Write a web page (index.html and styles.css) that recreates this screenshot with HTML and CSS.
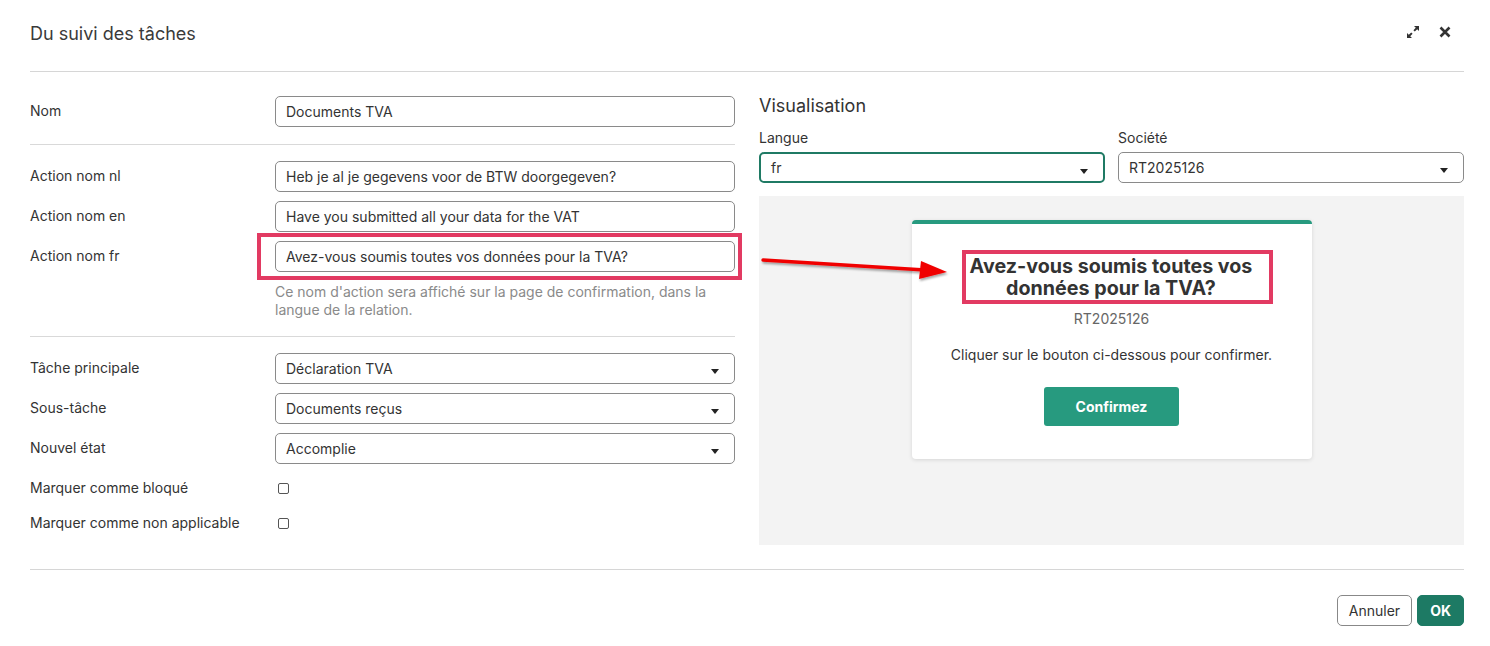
FILE: index.html
```html
<!DOCTYPE html>
<html lang="fr">
<head>
    <meta charset="UTF-8">
    <meta name="viewport" content="width=device-width, initial-scale=1.0">
    <title>Du suivi des tâches</title>
    <link rel="stylesheet" href="styles.css">
</head>
<body>
    <div class="dialog">
        <div class="dialog-header">
            <div class="dialog-title">Du suivi des tâches</div>
            <div class="header-icons">
                <!-- expand -->
                <svg width="14" height="14" viewBox="0 0 14 14">
                    <path d="M8 1h5v5l-1.8-1.8-2.4 2.4-1.4-1.4 2.4-2.4z M6 13H1V8l1.8 1.8 2.4-2.4 1.4 1.4-2.4 2.4z" fill="#333"/>
                </svg>
                <!-- close -->
                <svg width="14" height="14" viewBox="0 0 14 14">
                    <path d="M2.5 2.5l9 9M11.5 2.5l-9 9" stroke="#333" stroke-width="2.6"/>
                </svg>
            </div>
        </div>

        <div class="dialog-body">
            <div class="form-col">
                <div class="form-row">
                    <div class="form-label">Nom</div>
                    <div class="input">Documents TVA</div>
                </div>

                <div class="separator"></div>

                <div class="form-group">
                    <div class="form-row">
                        <div class="form-label">Action nom nl</div>
                        <div class="input">Heb je al je gegevens voor de BTW doorgegeven?</div>
                    </div>
                    <div class="form-row">
                        <div class="form-label">Action nom en</div>
                        <div class="input">Have you submitted all your data for the VAT</div>
                    </div>
                    <div class="form-row">
                        <div class="form-label">Action nom fr</div>
                        <div class="input highlighted">Avez-vous soumis toutes vos données pour la TVA?</div>
                    </div>
                    <div class="help-text">Ce nom d'action sera affiché sur la page de confirmation, dans la langue de la relation.</div>
                </div>

                <div class="separator"></div>

                <div class="form-group">
                    <div class="form-row">
                        <div class="form-label">Tâche principale</div>
                        <div class="input select">Déclaration TVA</div>
                    </div>
                    <div class="form-row">
                        <div class="form-label">Sous-tâche</div>
                        <div class="input select">Documents reçus</div>
                    </div>
                    <div class="form-row">
                        <div class="form-label">Nouvel état</div>
                        <div class="input select">Accomplie</div>
                    </div>
                </div>

                <div class="check-group">
                    <div class="check-row">
                        <div class="form-label">Marquer comme bloqué</div>
                        <div class="checkbox"></div>
                    </div>
                    <div class="check-row">
                        <div class="form-label">Marquer comme non applicable</div>
                        <div class="checkbox"></div>
                    </div>
                </div>
            </div>

            <div class="preview-col">
                <div class="preview-title">Visualisation</div>
                <div class="preview-filters">
                    <div class="filter">
                        <div class="filter-label">Langue</div>
                        <div class="input select focused">fr</div>
                    </div>
                    <div class="filter">
                        <div class="filter-label">Société</div>
                        <div class="input select">RT2025126</div>
                    </div>
                </div>
                <div class="preview-area">
                    <div class="preview-card">
                        <div class="card-title">Avez-vous soumis toutes vos données pour la TVA?</div>
                        <div class="card-ref">RT2025126</div>
                        <div class="card-text">Cliquer sur le bouton ci-dessous pour confirmer.</div>
                        <button class="confirm-button">Confirmez</button>
                    </div>
                </div>

                <!-- annotation arrow -->
                <svg class="arrow" width="200" height="30" viewBox="0 0 200 30">
                    <defs>
                        <filter id="shadow" x="-10%" y="-50%" width="120%" height="200%">
                            <feDropShadow dx="1" dy="2" stdDeviation="1.2" flood-color="#000" flood-opacity="0.35"/>
                        </filter>
                    </defs>
                    <g filter="url(#shadow)">
                        <path d="M4 5 L166 15" stroke="#f00000" stroke-width="3.4" stroke-linecap="round"/>
                        <path d="M162 6 L188 17 L160 24 Z" fill="#f00000"/>
                    </g>
                </svg>
            </div>
        </div>

        <div class="dialog-footer">
            <button class="btn btn-cancel">Annuler</button>
            <button class="btn btn-ok">OK</button>
        </div>
    </div>
</body>
</html>
```

FILE: styles.css
```css
body {
    margin: 0;
    padding: 0;
    background: #fff;
    font-family: Inter, "Noto Sans", Arial, sans-serif;
    color: #333;
}

.dialog {
    width: 1434px;
    padding: 0 26px 0 30px;
}

.dialog-header {
    height: 71px;
    display: flex;
    justify-content: space-between;
    align-items: center;
    border-bottom: 1px solid #d6d6d6;
}

.dialog-title {
    font-size: 18px;
    color: #3a3a3a;
    margin-top: -5px;
}

.header-icons {
    display: flex;
    gap: 18px;
    margin-top: -7px;
    margin-right: 12px;
}

.dialog-body {
    display: grid;
    grid-template-columns: 705px 705px;
    gap: 24px;
    padding-top: 24px;
    position: relative;
}

/* left form */

.form-row {
    display: flex;
    align-items: center;
}

.form-label {
    width: 245px;
    flex-shrink: 0;
    font-size: 14px;
    color: #333;
    margin-top: -3px;
}

.input {
    flex: 1;
    height: 29px;
    border: 1px solid #8a8a8a;
    border-radius: 5px;
    padding: 0 10px;
    font-size: 14px;
    line-height: 29px;
    color: #333;
    box-sizing: content-box;
    position: relative;
    white-space: nowrap;
}

.form-row .input {
    max-width: 438px;
}

.input.select::after {
    content: "";
    position: absolute;
    right: 15px;
    top: 15px;
    border-left: 4.5px solid transparent;
    border-right: 4.5px solid transparent;
    border-top: 5px solid #222;
}

.input.focused {
    border: 2px solid #1f7a64;
    height: 27px;
    line-height: 27px;
    padding: 0 10px 0 10px;
    margin: 0;
}

.input.highlighted::before {
    content: "";
    position: absolute;
    left: -19px;
    right: -8px;
    top: -9px;
    bottom: -9px;
    border: 4px solid #e23a62;
}

.separator {
    height: 1px;
    background: #d9d9d9;
    margin: 17px 0 16px;
}

.form-group {
    display: flex;
    flex-direction: column;
    gap: 9px;
}

.help-text {
    margin-left: 245px;
    margin-top: 2px;
    font-size: 14px;
    line-height: 18px;
    color: #8a8a8a;
    padding-right: 20px;
}

.check-group {
    display: flex;
    flex-direction: column;
    gap: 8px;
    margin-top: 11px;
}

.check-row {
    display: flex;
    align-items: center;
    height: 27px;
}

.checkbox {
    width: 9px;
    height: 9px;
    border: 1.5px solid #555;
    border-radius: 2px;
    margin-left: 3px;
}

/* right preview */

.preview-col {
    display: flex;
    flex-direction: column;
    position: relative;
}

.preview-title {
    font-size: 18px;
    color: #333;
    margin-top: -1px;
    line-height: 22px;
}

.preview-filters {
    display: grid;
    grid-template-columns: 1fr 1fr;
    gap: 13px;
    margin-top: 12px;
}

.filter-label {
    font-size: 14px;
    line-height: 18px;
    margin-bottom: 5px;
    color: #333;
}

.preview-filters .input {
    flex: none;
}

.preview-area {
    margin-top: 13px;
    height: 349px;
    background: #f3f3f3;
    display: flex;
    justify-content: center;
    align-items: flex-start;
    padding-top: 24px;
    box-sizing: border-box;
}

.preview-card {
    width: 400px;
    height: 239px;
    box-sizing: border-box;
    background: #fff;
    border-top: 4px solid #279a7f;
    border-radius: 4px;
    box-shadow: 0 1px 4px rgba(0, 0, 0, 0.12);
    display: flex;
    flex-direction: column;
    align-items: center;
    text-align: center;
    padding-top: 26px;
}

.card-title {
    width: 311px;
    border: 4px solid #e23a62;
    margin-left: 11px;
    font-size: 19.7px;
    font-weight: bold;
    line-height: 22px;
    color: #333;
    padding: 1px 12px 1px 0;
    box-sizing: border-box;
}

.card-ref {
    margin-top: 6px;
    font-size: 14px;
    line-height: 18px;
    color: #666;
}

.card-text {
    margin-top: 18px;
    font-size: 14px;
    line-height: 18px;
    color: #333;
}

.confirm-button {
    margin-top: 23px;
    width: 135px;
    height: 39px;
    border: none;
    border-radius: 3px;
    background: #279a7f;
    color: #fff;
    font-family: inherit;
    font-size: 14px;
    font-weight: bold;
}

.arrow {
    position: absolute;
    left: 0;
    top: 159px;
}

/* footer */

.dialog-footer {
    margin-top: 24px;
    border-top: 1px solid #d6d6d6;
    padding-top: 25px;
    display: flex;
    justify-content: flex-end;
    gap: 5px;
}

.btn {
    height: 31px;
    font-family: inherit;
    font-size: 14px;
    border-radius: 5px;
    padding: 0 11px;
}

.btn-cancel {
    background: #fff;
    border: 1px solid #888;
    color: #333;
}

.btn-ok {
    background: #1d7a64;
    border: 1px solid #1d7a64;
    color: #fff;
    font-weight: bold;
    padding: 0 12px;
}
```
